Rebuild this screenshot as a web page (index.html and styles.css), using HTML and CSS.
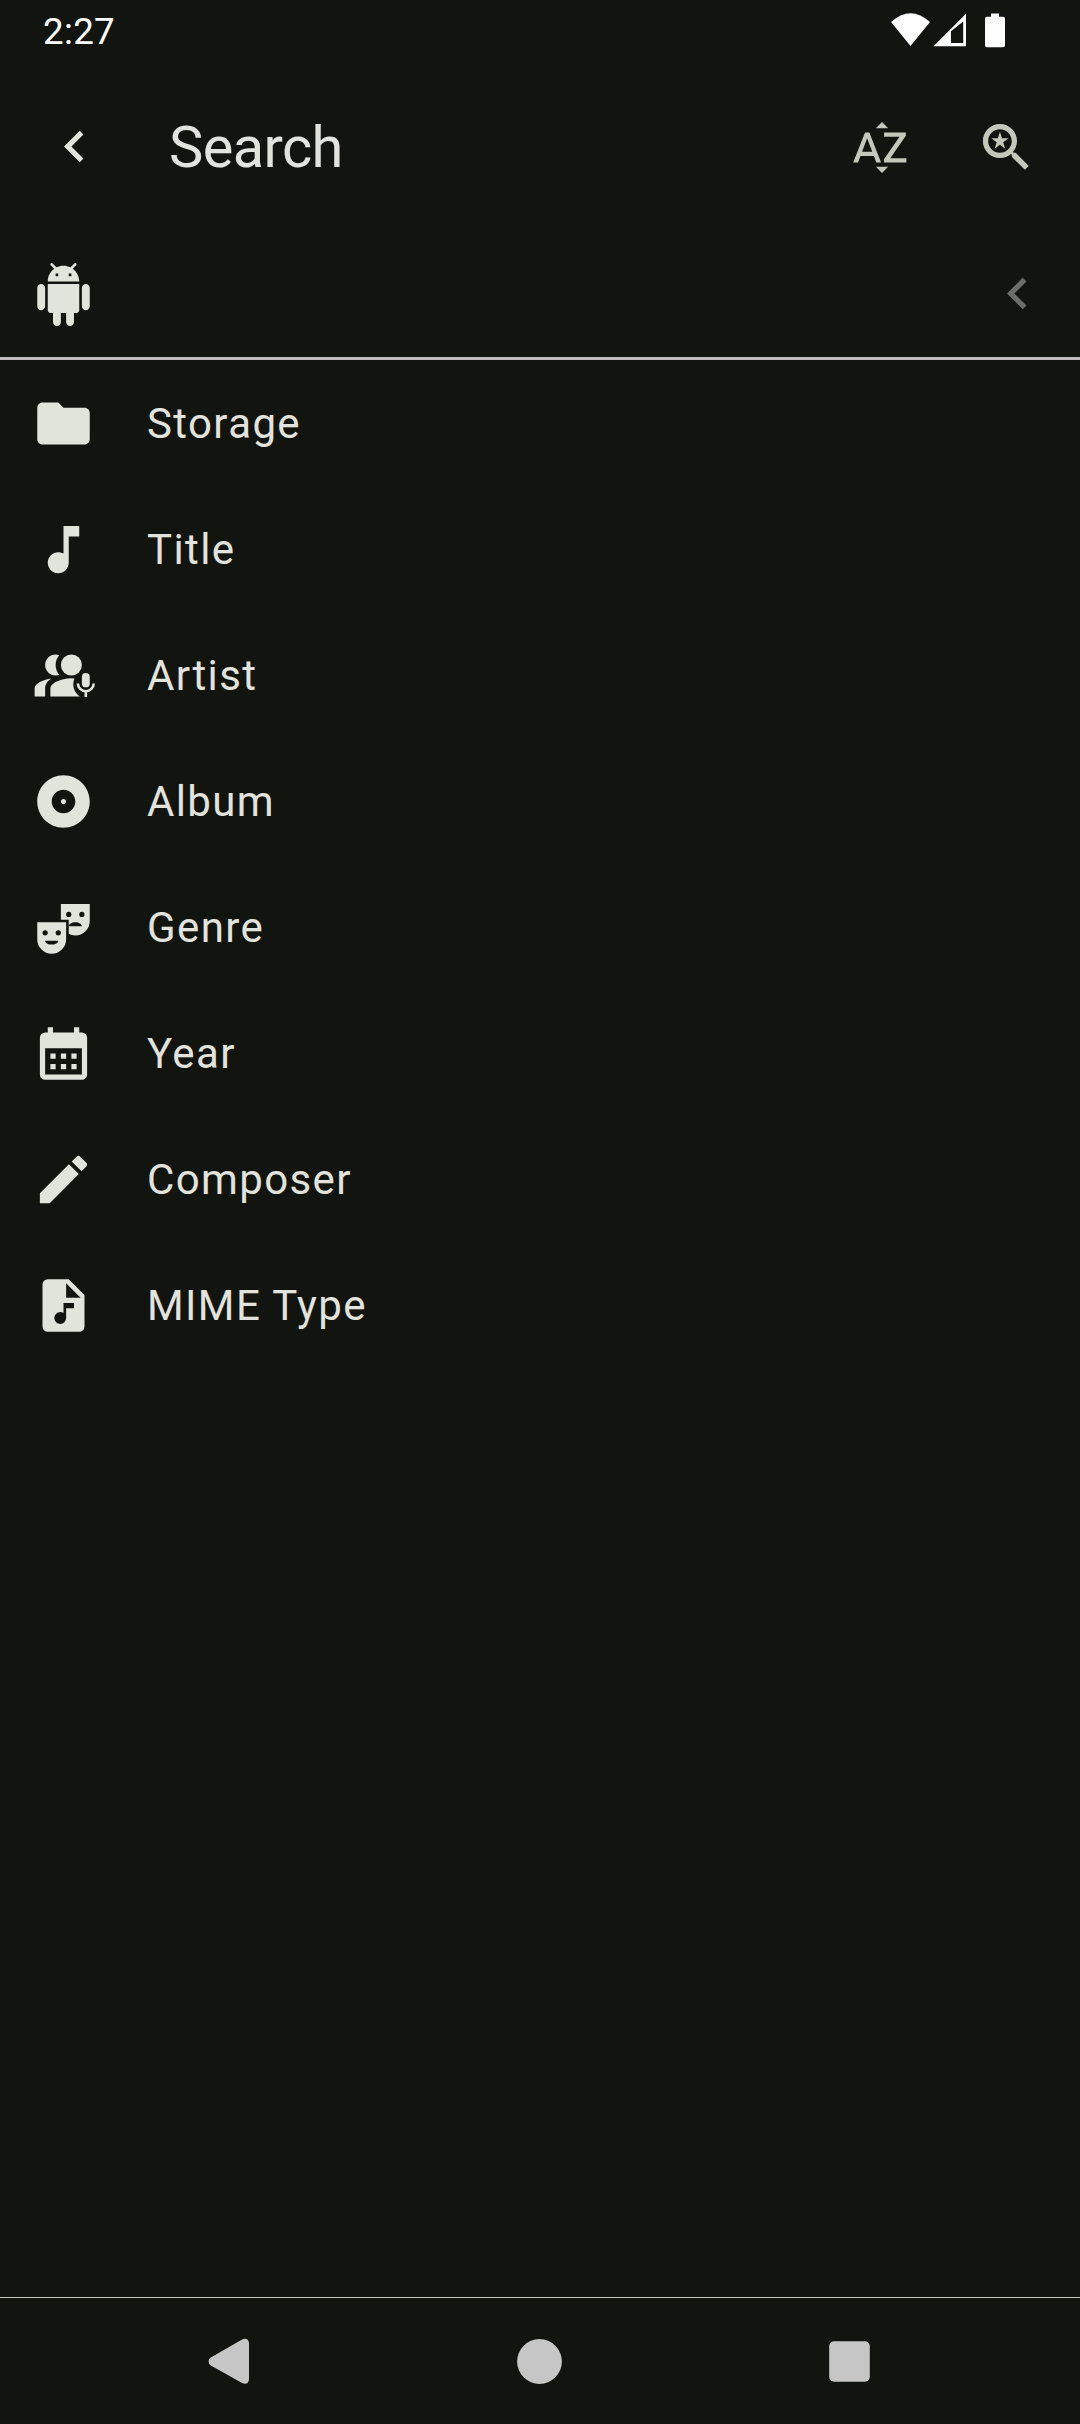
FILE: index.html
```html
<!DOCTYPE html>
<html lang="en">
<head>
<meta charset="utf-8">
<title>Search</title>
<link rel="stylesheet" href="styles.css">
</head>
<body>
<div class="screen">
  <div class="status">
    <span class="clock">2:27</span>
    <svg class="status-icons" viewBox="0 0 120 40" aria-hidden="true">
      <path d="M0 9Q19.5-8.500 39 9L19.500 33z"/>
      <path fill-rule="evenodd" d="M42.500 33.300L75 .7v32.600zM60 18.200V30h12.200V8.500z"/>
      <path d="M100 .5h8v3.300h4a2 2 0 0 1 2 2v26.500a2 2 0 0 1-2 2H96a2 2 0 0 1-2-2V5.800a2 2 0 0 1 2-2h4z"/>
    </svg>
  </div>
  <header class="appbar">
    <svg class="icon back" viewBox="0 0 24 24"><path d="M15.410 7.410L14 6l-6 6 6 6 1.410-1.410L10.830 12z"/></svg>
    <h1 class="title">Search</h1>
    <svg class="icon action" viewBox="0 0 24 24"><path d="M14.940 4.660h-4.720l2.360-2.360zm-4.690 14.710h4.660l-2.330 2.330zM6.100 6.270L1.600 17.730h1.840l.92-2.450h5.110l.92 2.450h1.840L7.740 6.270zm-1.130 7.370l1.940-5.180 1.940 5.180zm10.760 2.500h6.120v1.590h-8.530v-1.290l5.920-8.560h-5.880v-1.600h8.300v1.260z"/></svg>
    <svg class="icon action" viewBox="0 0 24 24"><path d="M15.500 14h-.79l-.28-.27C15.410 12.590 16 11.110 16 9.500 16 5.910 13.090 3 9.500 3S3 5.910 3 9.500 5.910 16 9.500 16c1.610 0 3.090-.59 4.230-1.570l.27.28v.79l5 4.990L20.490 19zm-6 0C7.010 14 5 11.990 5 9.500S7.010 5 9.500 5 14 7.010 14 9.500 11.990 14 9.500 14z"/><path d="M10.290 8.440L9.500 6l-.79 2.440H6.250l2.010 1.590-.77 2.470 2.010-1.530 2.010 1.530-.77-2.470 2.010-1.590z"/></svg>
  </header>
  <div class="crumbs">
    <svg class="icon" viewBox="0 0 24 24"><path d="M6 18c0 .55.45 1 1 1h1v3.500c0 .83.67 1.500 1.500 1.500s1.500-.67 1.500-1.500V19h2v3.500c0 .83.67 1.500 1.500 1.500s1.500-.67 1.500-1.500V19h1c.55 0 1-.45 1-1V8H6zM3.500 8C2.670 8 2 8.670 2 9.500v7c0 .83.67 1.500 1.500 1.500S5 17.330 5 16.500v-7C5 8.670 4.330 8 3.500 8zm17 0c-.83 0-1.500.67-1.500 1.500v7c0 .83.67 1.500 1.500 1.500s1.500-.67 1.500-1.500v-7c0-.83-.67-1.500-1.500-1.500zm-4.970-5.840l1.300-1.300c.2-.2.2-.51 0-.71s-.51-.2-.71 0l-1.480 1.480C13.850 1.230 12.950 1 12 1c-.96 0-1.860.23-2.660.63L7.850.15c-.2-.2-.51-.2-.71 0s-.2.51 0 .71l1.310 1.310C6.970 3.260 6 5.010 6 7h12c0-1.990-.97-3.750-2.470-4.840zM10 5H9V4h1zm5 0h-1V4h1z"/></svg>
    <svg class="icon dim" viewBox="0 0 24 24"><path d="M15.410 7.410L14 6l-6 6 6 6 1.410-1.410L10.830 12z"/></svg>
  </div>
  <ul class="list">
    <li class="row"><svg class="icon" viewBox="0 0 24 24"><path d="M10 4H4c-1.100 0-1.990.9-1.990 2L2 18c0 1.100.9 2 2 2h16c1.100 0 2-.9 2-2V8c0-1.100-.9-2-2-2h-8z"/></svg><span class="label">Storage</span></li>
    <li class="row"><svg class="icon" viewBox="0 0 24 24"><path d="M12 3v10.550c-.59-.34-1.270-.55-2-.55-2.210 0-4 1.790-4 4s1.790 4 4 4 4-1.790 4-4V7h4V3z"/></svg><span class="label">Title</span></li>
    <li class="row"><svg class="icon" viewBox="0 0 24 24">
      <path d="M7.330 13.130C5.960 14.060 5 15.320 5 17v3H1v-3c0-2.180 3.570-3.470 6.330-3.870z"/>
      <circle cx="15" cy="8" r="4"/>
      <path d="M9 12c-2.210 0-4-1.790-4-4s1.790-4 4-4c.47 0 .91.1 1.330.24C9.500 5.270 9 6.580 9 8s.5 2.730 1.330 3.760C9.910 11.900 9.470 12 9 12z"/>
      <path d="M15 13c-2.670 0-8 1.340-8 4v3h11.300A5.500 5.500 0 0 1 16.200 13.100Q15.600 13 15 13z"/>
      <rect x="19" y="11" width="3" height="5.500" rx="1.500"/>
      <path class="line" d="M17.500 15a3 3 0 0 0 6 0M20.500 18v2.200"/>
    </svg><span class="label">Artist</span></li>
    <li class="row"><svg class="icon" viewBox="0 0 24 24"><path d="M12 2C6.480 2 2 6.480 2 12s4.480 10 10 10 10-4.480 10-10S17.520 2 12 2zm0 14.500c-2.490 0-4.500-2.010-4.500-4.500S9.510 7.500 12 7.500s4.500 2.010 4.500 4.500-2.010 4.500-4.500 4.500zm0-5.500c-.55 0-1 .45-1 1s.45 1 1 1 1-.45 1-1-.45-1-1-1z"/></svg><span class="label">Album</span></li>
    <li class="row"><svg class="icon" viewBox="0 0 24 24"><path fill-rule="evenodd" d="M2 16.500a5.500 5.500 0 0 0 11 0V10H2zM7.500 18.500C6.120 18.500 5 17.830 5 17h5c0 .83-1.120 1.500-2.500 1.500zM9 14a1 1 0 1 0 2 0 1 1 0 1 0-2 0zM4 14a1 1 0 1 0 2 0 1 1 0 1 0-2 0z"/><path fill-rule="evenodd" d="M11 3v6h3v2.500c0-.83 1.120-1.500 2.500-1.500s2.500.67 2.500 1.500h-5v2.890c.75.38 1.600.61 2.500.61A5.500 5.500 0 0 0 22 9.500V3zM13 7a1 1 0 1 0 2 0 1 1 0 1 0-2 0zM18 7a1 1 0 1 0 2 0 1 1 0 1 0-2 0z"/></svg><span class="label">Genre</span></li>
    <li class="row"><svg class="icon" viewBox="0 0 24 24"><path fill-rule="evenodd" d="M19 4h-1V2h-2v2H8V2H6v2H5a2 2 0 0 0-2 2v14a2 2 0 0 0 2 2h14a2 2 0 0 0 2-2V6a2 2 0 0 0-2-2zm0 16H5V10h14z"/><path d="M7 12h2v2H7zM11 12h2v2h-2zM15 12h2v2h-2zM7 16h2v2H7zM11 16h2v2h-2zM15 16h2v2h-2z"/></svg><span class="label">Year</span></li>
    <li class="row"><svg class="icon" viewBox="0 0 24 24"><path d="M3 17.250V21h3.750L17.810 9.940l-3.750-3.750zM20.710 7.040c.39-.39.39-1.020 0-1.410l-2.340-2.340c-.39-.39-1.020-.39-1.410 0l-1.830 1.830 3.750 3.750z"/></svg><span class="label">Composer</span></li>
    <li class="row"><svg class="icon" viewBox="0 0 24 24"><path fill-rule="evenodd" d="M14 2H6a2 2 0 0 0-2 2v16a2 2 0 0 0 2 2h12a2 2 0 0 0 2-2V8zM16 13h-3v3.750a2.250 2.250 0 1 1-2.250-2.250c.46 0 .89.14 1.250.38V11h4zM13 9V3.500L18.500 9z"/></svg><span class="label">MIME Type</span></li>
  </ul>
  <nav class="navbar">
    <svg class="nav-icon" viewBox="0 0 48 48"><path d="M36.500 2.200L4.800 20.600a4.500 4.500 0 0 0 0 7.800L36.500 46.300Q42.800 48 43 42V6.500Q42.800.5 36.500 2.200z"/></svg>
    <svg class="nav-icon" viewBox="0 0 48 48"><circle cx="23.500" cy="24.500" r="22.400"/></svg>
    <svg class="nav-icon" viewBox="0 0 48 48"><rect x="3.200" y="4.200" width="40.600" height="40.600" rx="5"/></svg>
  </nav>
</div>
</body>
</html>
```
FILE: styles.css
```css
* { box-sizing: border-box; }
body { margin: 0; background: #12140f; font-family: Roboto, sans-serif; color: #e2e3dc; }
.screen { width: 1080px; height: 2424px; display: flex; flex-direction: column; }
svg { display: block; flex: none; fill: currentColor; }
.icon { width: 63px; height: 63px; color: #e1e4da; }
.line { fill: none; stroke: currentColor; stroke-width: 1; }

.status { height: 63px; display: flex; justify-content: space-between; padding: 10px 69px 0 43px; color: #fff; }
.clock { font-size: 36.750px; line-height: 44px; letter-spacing: 0.3px; }
.status-icons { width: 120px; height: 40px; margin-top: 3px; }

.appbar { height: 168px; display: flex; align-items: center; padding: 0 42px 0 43px; }
.back { margin-bottom: 2px; }
.title { flex: 1; margin: 0 0 0 63px; font-size: 57.750px; font-weight: 400; line-height: 74px; letter-spacing: -0.6px; }
.action { color: #c4c8bb; margin-left: 63px; }

.crumbs { height: 129px; display: flex; align-items: flex-start; justify-content: space-between; padding: 32px 31px 0 32px; border-bottom: 3px solid #c0bcbb; }
.crumbs .dim { color: #6b6d68; margin-top: -1px; }

.list { flex: 1; margin: 0; padding: 0; list-style: none; }
.row { height: 126px; display: flex; align-items: flex-start; gap: 52px; padding: 32px 0 0 32px; }
.label { font-size: 42px; line-height: 63px; letter-spacing: 1.380px; }

.navbar { height: 127px; display: grid; grid-template-columns: repeat(3, 310px); justify-content: center; justify-items: center; align-items: center; border-top: 1px solid #c4c8bb; color: #c7c6c6; }
.nav-icon { width: 48px; height: 48px; }
```
